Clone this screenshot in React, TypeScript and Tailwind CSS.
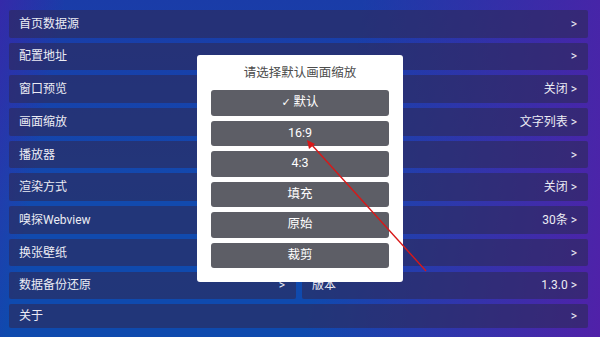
import React from "react";

const rows: { label: string; value: string }[] = [
  { label: "首页数据源", value: ">" },
  { label: "配置地址", value: ">" },
  { label: "窗口预览", value: "关闭 >" },
  { label: "画面缩放", value: "文字列表 >" },
  { label: "播放器", value: ">" },
  { label: "渲染方式", value: "关闭 >" },
  { label: "嗅探Webview", value: "30条 >" },
  { label: "换张壁纸", value: ">" },
];

const options = ["√ 默认", "16:9", "4:3", "填充", "原始", "裁剪"];

const rowCls =
  "flex items-center justify-between h-[27.5px] bg-[rgba(45,42,88,0.62)] rounded-[2px] pl-[10px] pr-[11px] text-[12px] text-[#ececf4]";

export default function App() {
  return (
    <div
      className="relative w-[600px] h-[337px] overflow-hidden"
      style={{
        fontFamily: 'Roboto, "Noto Sans CJK SC", sans-serif',
        background:
          "linear-gradient(100deg, rgba(70,30,170,0.6) 0%, rgba(20,64,168,0) 10%, rgba(20,64,168,0) 55%, rgba(88,28,168,0.9) 100%), linear-gradient(180deg, #1a3ca8 0%, #124aae 60%, #0e4aae 100%)",
      }}
    >
      <div className="flex flex-col gap-[5.2px] pt-[10px] pl-[9px] pr-[12px]">
        {rows.map((r) => (
          <div key={r.label} className={rowCls}>
            <span>{r.label}</span>
            <span>{r.value}</span>
          </div>
        ))}
        <div className="flex gap-[6px]">
          <div className={rowCls + " w-[287px]"}>
            <span>数据备份还原</span>
            <span>&gt;</span>
          </div>
          <div className={rowCls + " flex-1"}>
            <span>版本</span>
            <span>1.3.0 &gt;</span>
          </div>
        </div>
        <div className={rowCls + " !h-[24px]"}>
          <span>关于</span>
          <span>&gt;</span>
        </div>
      </div>

      <div className="absolute left-[197px] top-[55px] w-[206px] h-[227px] bg-white rounded-[3px] flex flex-col items-center px-[14px]">
        <div className="h-[35px] flex items-center justify-center text-[12.5px] text-[#4c4c4c] pt-[1px]">
          请选择默认画面缩放
        </div>
        <div className="flex flex-col gap-[5px] w-full">
          {options.map((o) => (
            <div
              key={o}
              className="h-[25.5px] w-full rounded-[3px] bg-[#5d5e66] text-white text-[12.5px] flex items-center justify-center"
            >
              {o.startsWith("√") ? (
                <>
                  <span className="text-[11px] mr-[3px]" style={{ fontFamily: '"DejaVu Sans", sans-serif' }}>✓</span>
                  <span>默认</span>
                </>
              ) : (
                o
              )}
            </div>
          ))}
        </div>
      </div>

      <svg className="absolute left-0 top-0 pointer-events-none" width="600" height="337">
        <line x1="426" y1="271" x2="311" y2="144" stroke="#d81818" strokeWidth="1.4" />
        <polygon points="307,140 309,149 315,144" fill="#d81818" />
      </svg>
    </div>
  );
}
